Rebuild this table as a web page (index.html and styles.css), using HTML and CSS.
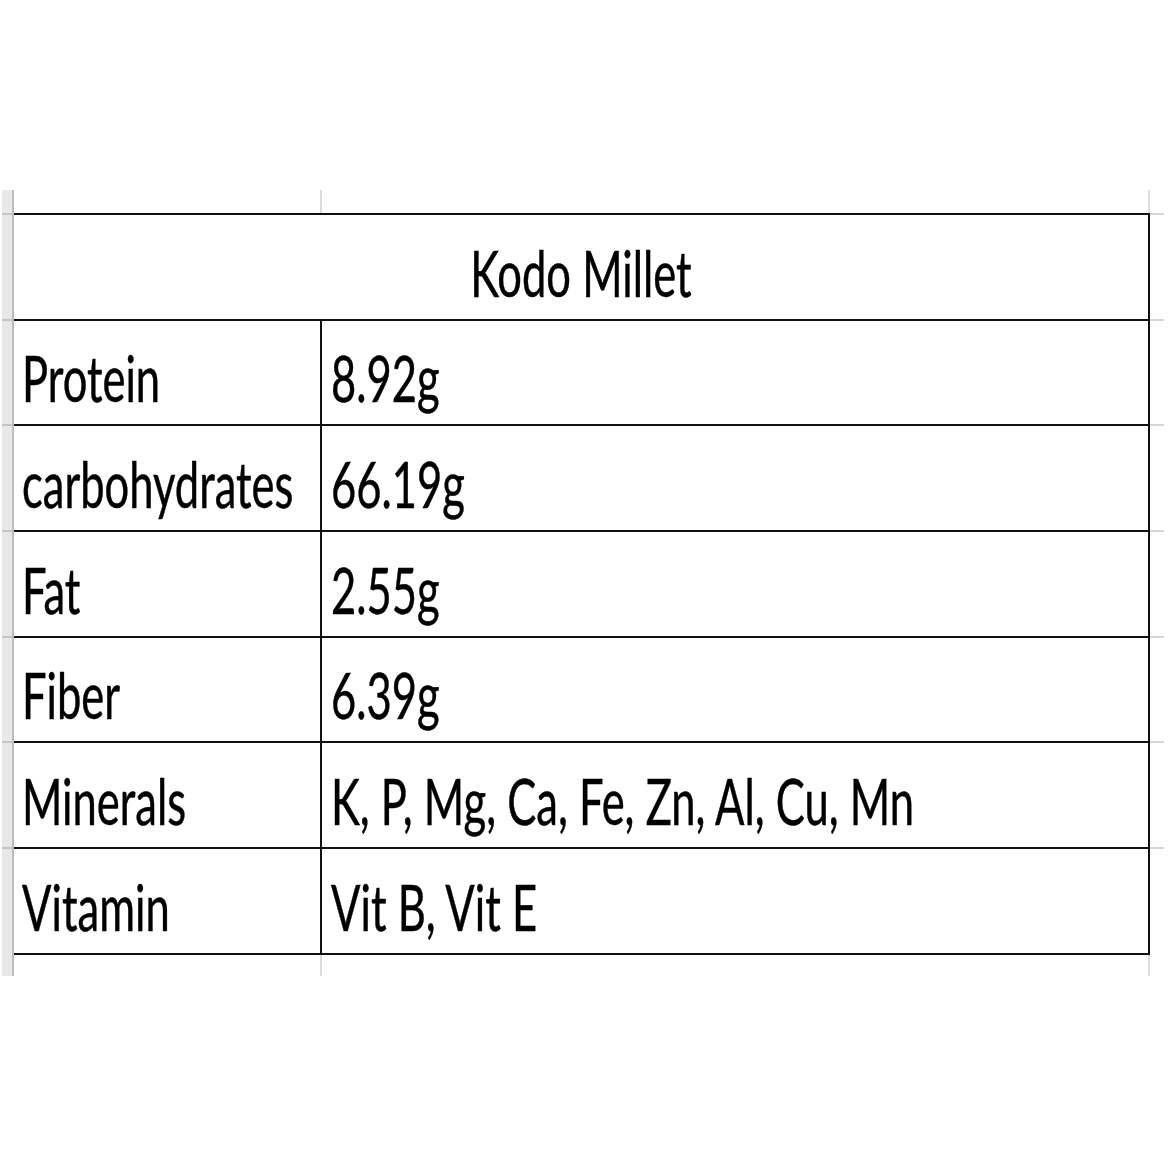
FILE: index.html
```html
<!DOCTYPE html>
<html>
<head>
<meta charset="utf-8">
<link rel="stylesheet" href="styles.css">
</head>
<body>
<div class="sheet">
  <div class="gutter"></div>
  <div class="area">
    <div class="pad top">
      <div class="pc c1"></div>
      <div class="pc c2"></div>
    </div>
    <div class="table">
      <div class="row head">
        <div class="cell full"><span class="t tc">Kodo Millet</span></div>
      </div>
      <div class="row">
        <div class="cell c1"><span class="t">Protein</span></div>
        <div class="cell c2"><span class="t">8.92g</span></div>
      </div>
      <div class="row">
        <div class="cell c1"><span class="t">carbohydrates</span></div>
        <div class="cell c2"><span class="t">66.19g</span></div>
      </div>
      <div class="row">
        <div class="cell c1"><span class="t">Fat</span></div>
        <div class="cell c2"><span class="t">2.55g</span></div>
      </div>
      <div class="row">
        <div class="cell c1"><span class="t">Fiber</span></div>
        <div class="cell c2"><span class="t">6.39g</span></div>
      </div>
      <div class="row">
        <div class="cell c1"><span class="t">Minerals</span></div>
        <div class="cell c2"><span class="t">K, P, Mg, Ca, Fe, Zn, Al, Cu, Mn</span></div>
      </div>
      <div class="row last">
        <div class="cell c1"><span class="t">Vitamin</span></div>
        <div class="cell c2"><span class="t">Vit B, Vit E</span></div>
      </div>
    </div>
    <div class="pad bottom">
      <div class="pc c1"></div>
      <div class="pc c2"></div>
    </div>
  </div>
</div>
</body>
</html>
```
FILE: styles.css
```css
html, body {
  margin: 0;
  padding: 0;
  background: #ffffff;
}
body {
  font-family: Lato, "Open Sans", sans-serif;
  color: #000;
}
.sheet {
  margin-top: 190px;
  display: flex;
  align-items: flex-start;
}
.gutter {
  margin-left: 2px;
  width: 10px;
  height: 786px;
  background: #e8e8e8;
  border-right: 2px solid #bdbdbd;
}
.area {
  width: 1136px;
  display: flex;
  flex-direction: column;
}
.pad {
  height: 23px;
  display: flex;
}
.pad.bottom {
  height: 21px;
}
.pc.c1 {
  width: 306px;
  border-right: 2px solid #dcdcdc;
}
.pc.c2 {
  width: 826px;
  border-right: 2px solid #dcdcdc;
}
.table {
  display: flex;
  flex-direction: column;
  width: 1136px;
}
.row {
  position: relative;
  box-sizing: border-box;
  height: 105.7px;
  border-top: 2px solid #111;
  display: flex;
  width: 1136px;
  border-right: 2px solid #111;
}
.row::after {
  content: "";
  position: absolute;
  top: -2px;
  left: 1136px;
  width: 14px;
  height: 2px;
  background: #d6d6d6;
}
.row::before {
  content: "";
  position: absolute;
  top: -2px;
  left: -12px;
  width: 10px;
  height: 2px;
  background: #c4c4c4;
}
.row.last {
  height: 107.7px;
  border-bottom: 2px solid #111;
}
.cell {
  box-sizing: border-box;
  display: flex;
  align-items: flex-end;
  padding-bottom: 8px;
  white-space: nowrap;
}
.cell.full {
  width: 100%;
  justify-content: center;
}
.cell.c1 {
  width: 308px;
  padding-left: 8px;
  border-right: 2px solid #111;
}
.cell.c2 {
  width: 826px;
  padding-left: 9px;
}
.t {
  display: inline-block;
  font-size: 64px;
  line-height: 76px;
  transform: scaleX(0.68);
  transform-origin: left bottom;
  -webkit-text-stroke: 0.5px #000;
}
.t.tc {
  transform-origin: center bottom;
}
```
